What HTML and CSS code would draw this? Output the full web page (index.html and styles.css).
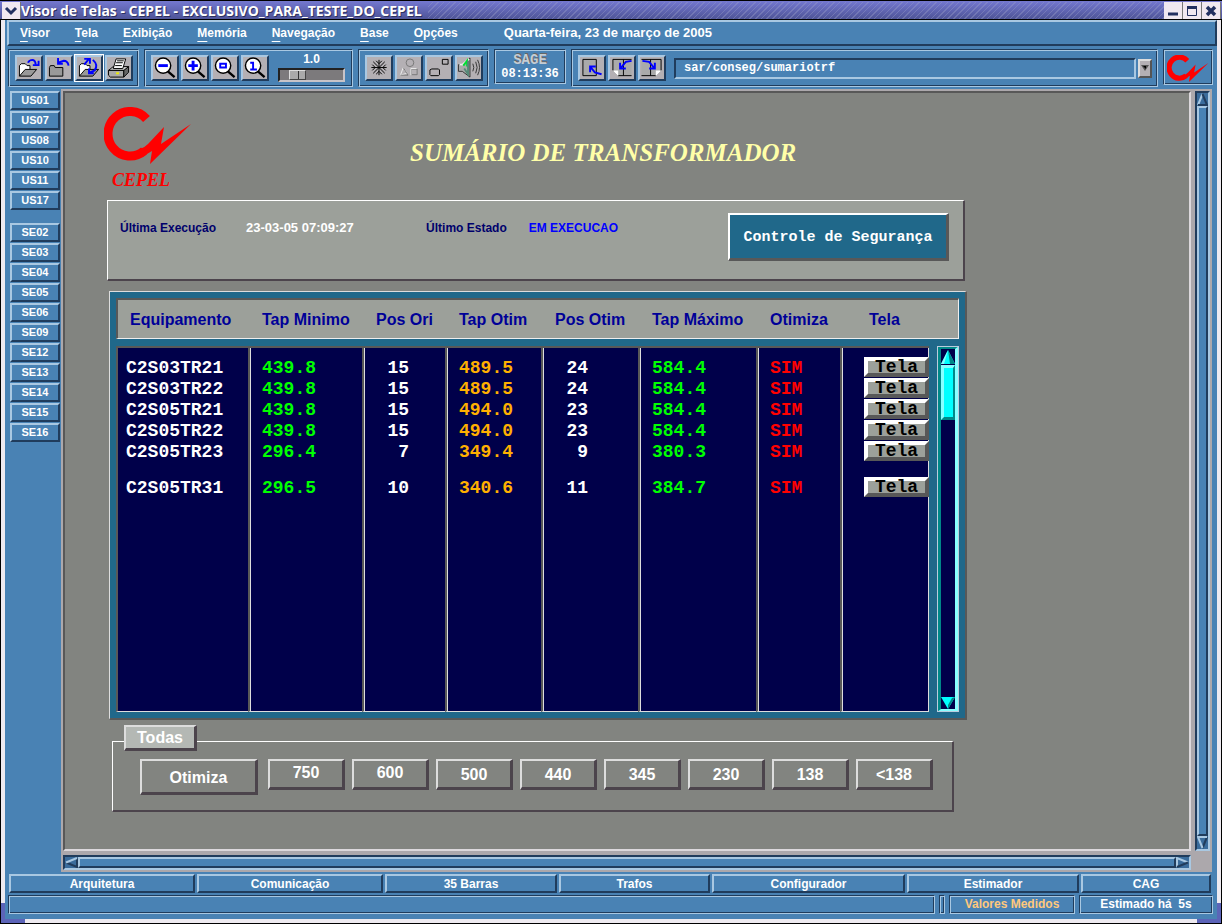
FILE: index.html
```html
<!DOCTYPE html>
<html lang="pt-BR">
<head>
<meta charset="utf-8">
<title>Visor de Telas - CEPEL</title>
<link rel="stylesheet" href="styles.css">
</head>
<body>
<svg class="defs" aria-hidden="true">
  <symbol id="logo" viewBox="0 0 88 57">
    <path class="ring" d="M42.500 12A22 22.300 0 1 0 40 44" fill="none" stroke="#f00"/>
    <path d="M36 42Q40 41 44 37L60 20L57 37L87 17L46 57L48 44L38 50Z" fill="#f00"/>
  </symbol>
  <symbol id="lens" viewBox="0 0 24 23">
    <circle cx="10" cy="9" r="8" fill="#fff" stroke="#000" stroke-width="1.500"/>
    <path d="M15 15L22 21" stroke="#000" stroke-width="2.500"/>
  </symbol>
</svg>

<header class="titlebar">
  <button class="wm" aria-label="Menu da janela"><svg width="14" height="14" viewBox="0 0 14 14"><path d="M2 4L7 9L12 4" fill="none" stroke="#223060" stroke-width="3"/></svg></button>
  <h1>Visor de Telas - CEPEL - EXCLUSIVO_PARA_TESTE_DO_CEPEL</h1>
  <div class="hatch"></div>
  <button class="wm" aria-label="Minimizar"><svg width="14" height="14" viewBox="0 0 14 14"><path d="M2 10H12" stroke="#223060" stroke-width="3"/></svg></button>
  <button class="wm" aria-label="Maximizar"><svg width="14" height="14" viewBox="0 0 14 14"><path d="M2.500 3V11.500H11.500V3" fill="none" stroke="#223060"/><path d="M2 3.500H12" stroke="#223060" stroke-width="3"/></svg></button>
  <button class="wm" aria-label="Fechar"><svg width="14" height="14" viewBox="0 0 14 14"><path d="M3 3L11 11M11 3L3 11" stroke="#223060" stroke-width="3.500"/></svg></button>
</header>

<div class="window">
  <nav class="menubar">
    <button><u>V</u>isor</button>
    <button><u>T</u>ela</button>
    <button><u>E</u>xibição</button>
    <button><u>M</u>emória</button>
    <button><u>N</u>avegação</button>
    <button><u>B</u>ase</button>
    <button><u>O</u>pções</button>
    <span class="today">Quarta-feira, 23 de março de 2005</span>
  </nav>

  <div class="toolbar">
    <div class="group">
      <button class="tool" aria-label="Abrir"><svg viewBox="0 0 24 23"><path d="M2 20V9L4 7H8L10 9H13V13" fill="#fff" stroke="#000"/><path d="M2 20L8 13H20L14 20Z" fill="#999" stroke="#000"/><path d="M11 6Q12 3 16 3Q19 4 19 8" fill="none" stroke="#00f" stroke-width="2"/><path d="M22 4V8.500H16" fill="none" stroke="#00f" stroke-width="2"/></svg></button>
      <button class="tool" aria-label="Fechar tela"><svg viewBox="0 0 24 23"><path d="M2 20V11L3 9H7L8 11H16V20Z" fill="#999" stroke="#000"/><path d="M22 9Q21 4 17 4L11 6" fill="none" stroke="#00f" stroke-width="2"/><path d="M11 1V7H16" fill="none" stroke="#00f" stroke-width="2"/></svg></button>
      <button class="tool active" aria-label="Recarregar"><svg viewBox="0 0 24 23"><path d="M2 20V9L4 7H8L10 9H13V13" fill="#fff" stroke="#000"/><path d="M2 20L8 13H22L16 20Z" fill="#999" stroke="#000"/><path d="M7 8L12 2M7 2H13V7M16 3Q22 8 18 14L13 16M12 12V17H17" fill="none" stroke="#00f" stroke-width="2"/></svg></button>
      <button class="tool" aria-label="Imprimir"><svg viewBox="0 0 24 23"><path d="M1 14L6 10H22L18 14Z" fill="#ccc" stroke="#000"/><path d="M1 14H17V21H3L1 19Z" fill="#aaa" stroke="#000"/><path d="M17 14L22 10V16L17 21Z" fill="#666" stroke="#000"/><path d="M6 12L9 2H19L16 12Z" fill="#fff" stroke="#000"/><path d="M10 4H17M9 6H16M8 9H15" stroke="#000"/><path d="M9 17H12" stroke="#ee0" stroke-width="2"/></svg></button>
    </div>

    <div class="group">
      <button class="tool" aria-label="Reduzir"><svg viewBox="0 0 24 23"><use href="#lens"/><path d="M5 9H15" stroke="#00f" stroke-width="3"/></svg></button>
      <button class="tool" aria-label="Ampliar"><svg viewBox="0 0 24 23"><use href="#lens"/><path d="M5 9H15M10 4V14" stroke="#00f" stroke-width="3"/></svg></button>
      <button class="tool" aria-label="Ampliar área"><svg viewBox="0 0 24 23"><use href="#lens"/><path d="M7 7H13V11H7Z" fill="none" stroke="#00f" stroke-width="2"/></svg></button>
      <button class="tool" aria-label="Tamanho original"><svg viewBox="0 0 24 23"><use href="#lens"/><path d="M7 6H10V13M7 13H14" fill="none" stroke="#00f" stroke-width="2"/></svg></button>
      <label class="zoom">1.0<input type="range" min="0" max="10" value="2"></label>
    </div>

    <div class="group">
      <button class="tool" aria-label="Congelar"><svg viewBox="0 0 24 23"><path d="M12 3V19M4 11H20M6 5L18 17M18 5L6 17" stroke="#000"/><path d="M9 4L12 7L15 4M9 18L12 15L15 18M5 8L8 11L5 14M19 8L16 11L19 14" fill="none" stroke="#000"/></svg></button>
      <button class="tool" aria-label="Formas"><svg viewBox="0 0 24 23"><circle cx="13" cy="6" r="4" fill="#b5b1b5" stroke="#777"/><path d="M3 19L6 11L10 17Z" fill="#b5b1b5" stroke="#eee"/><path d="M3 19H11L6 11" fill="none" stroke="#777"/><path d="M14.500 12.500H20.500V18.500H14.500Z" fill="#b5b1b5" stroke="#777"/><path d="M14 19V12H20" fill="none" stroke="#eee"/></svg></button>
      <button class="tool" aria-label="Navegar"><svg viewBox="0 0 24 23"><path d="M15.500 2.500H21.500V7.500H15.500Z M4.500 12.500H11.500L12.500 13.500V18.500L11.500 19.500H3.500L2.500 18.500V13.500Z" fill="none" stroke="#000"/></svg></button>
      <button class="tool" aria-label="Som"><svg viewBox="0 0 24 23"><path d="M1 8H5L13 1V21L5 15H1Z" fill="#aaa" stroke="#333"/><path d="M2 8H5L12 2" fill="none" stroke="#eee" stroke-width="2"/><path d="M6 9L10 4V10" fill="none" stroke="#0d3" stroke-width="2"/><path d="M7 12L11 18V4" fill="none" stroke="#587" stroke-width="2"/><path d="M16 7Q18 11 16 15M19 5Q22 11 19 17M21 3Q25 11 21 19" fill="none" stroke="#333"/></svg></button>
    </div>

    <div class="group clock"><span class="sage">SAGE</span><time>08:13:36</time></div>

    <div class="group path">
      <button class="tool" aria-label="Tela superior"><svg viewBox="0 0 24 23"><path d="M2.500 2.500H16.500V19.500H2.500Z" fill="#aaa" stroke="#000"/><path d="M10 16V10H16M10 10L15 16L22 18" fill="none" stroke="#00f" stroke-width="2"/></svg></button>
      <button class="tool" aria-label="Tela anterior"><svg viewBox="0 0 24 23"><path d="M22 2.500H2.500V14L8 19.500H22M13.500 2.500V19.500" fill="#aaa" stroke="#000"/><path d="M2 14H8V20Z" fill="#fff"/><path d="M10 6V12H16M11 11L16 5L22 4" fill="none" stroke="#00f" stroke-width="2"/></svg></button>
      <button class="tool" aria-label="Próxima tela"><svg viewBox="0 0 24 23"><path d="M1 2.500H21.500V14L16 19.500H1M10.500 2.500V19.500" fill="#aaa" stroke="#000"/><path d="M22 14H16V20Z" fill="#fff"/><path d="M15 6V12H9M14 11L9 5L2 4" fill="none" stroke="#00f" stroke-width="2"/></svg></button>
      <input class="address" type="text" value="sar/conseg/sumariotrf" aria-label="Tela">
      <button class="drop" aria-label="Histórico"><svg width="8" height="6" viewBox="0 0 8 6"><path d="M0 0H8L4 6Z" fill="#555"/><path d="M2 1H5V4Z" fill="#000"/></svg></button>
    </div>

    <div class="group brand"><svg width="42" height="27"><use href="#logo"/></svg></div>
  </div>

  <div class="middle">
    <aside class="stations">
      <button>US01</button><button>US07</button><button>US08</button><button>US10</button><button>US11</button><button>US17</button>
      <button class="split">SE02</button><button>SE03</button><button>SE04</button><button>SE05</button><button>SE06</button><button>SE09</button><button>SE12</button><button>SE13</button><button>SE14</button><button>SE15</button><button>SE16</button>
    </aside>

    <div class="viewer">
      <main class="canvas">
        <div class="heading">
          <div class="cepel"><svg width="88" height="57"><use href="#logo"/></svg><span>CEPEL</span></div>
          <h2>SUMÁRIO DE TRANSFORMADOR</h2>
        </div>

        <section class="state">
          <dl>
            <dt>Última Execução</dt><dd class="when">23-03-05 07:09:27</dd>
            <dt>Último Estado</dt><dd class="run">EM EXECUCAO</dd>
          </dl>
          <button class="security">Controle de Segurança</button>
        </section>

        <section class="sheet">
          <table>
            <colgroup><col class="w-eq"><col class="w-min"><col class="w-ori"><col class="w-tap"><col class="w-pos"><col class="w-max"><col class="w-oti"><col></colgroup>
            <thead>
              <tr><th>Equipamento</th><th>Tap Minimo</th><th>Pos Ori</th><th>Tap Otim</th><th>Pos Otim</th><th>Tap Máximo</th><th>Otimiza</th><th>Tela</th></tr>
            </thead>
            <tbody class="gap"><tr><td colspan="8"></td></tr></tbody>
            <tbody class="rows">
              <tr class="first"><td>C2S03TR21</td><td>439.8</td><td>15</td><td>489.5</td><td>24</td><td>584.4</td><td>SIM</td><td><button>Tela</button></td></tr>
              <tr><td>C2S03TR22</td><td>439.8</td><td>15</td><td>489.5</td><td>24</td><td>584.4</td><td>SIM</td><td><button>Tela</button></td></tr>
              <tr><td>C2S05TR21</td><td>439.8</td><td>15</td><td>494.0</td><td>23</td><td>584.4</td><td>SIM</td><td><button>Tela</button></td></tr>
              <tr><td>C2S05TR22</td><td>439.8</td><td>15</td><td>494.0</td><td>23</td><td>584.4</td><td>SIM</td><td><button>Tela</button></td></tr>
              <tr><td>C2S05TR23</td><td>296.4</td><td>7</td><td>349.4</td><td>9</td><td>380.3</td><td>SIM</td><td><button>Tela</button></td></tr>
              <tr class="apart"><td>C2S05TR31</td><td>296.5</td><td>10</td><td>340.6</td><td>11</td><td>384.7</td><td>SIM</td><td><button>Tela</button></td></tr>
              <tr class="fill"><td></td><td></td><td></td><td></td><td></td><td></td><td></td><td></td></tr>
            </tbody>
          </table>
          <div class="edge">
            <div class="corner"></div>
            <div class="cyanbar">
              <svg width="14" height="14" viewBox="0 0 14 14"><path d="M7 0L14 14H0Z" fill="#0ff"/><path d="M7 0L14 14H9Z" fill="#088"/><path d="M7 0L0 14H3Z" fill="#8ff"/></svg>
              <div class="thumb"></div>
              <svg class="end" width="14" height="12" viewBox="0 0 14 12"><path d="M0 0H14L7 12Z" fill="#0ff"/><path d="M14 0L7 12V8L11 1Z" fill="#088"/></svg>
            </div>
          </div>
        </section>

        <section class="levels">
          <button class="all">Todas</button>
          <div class="choices">
            <button class="optimize">Otimiza</button>
            <button class="high">750</button><button class="high">600</button><button>500</button><button>440</button><button>345</button><button>230</button><button>138</button><button>&lt;138</button>
          </div>
        </section>
      </main>

      <div class="bar vertical">
        <svg width="11" height="13" viewBox="0 0 11 13"><path d="M5.500 1L1 12" stroke="#a9c8e2" stroke-width="2"/><path d="M5.500 1L10 12H1" fill="none" stroke="#203c5c" stroke-width="2"/></svg>
        <div class="slab"></div>
        <svg width="11" height="13" viewBox="0 0 11 13"><path d="M10 1L5.500 12" stroke="#203c5c" stroke-width="2"/><path d="M10 1H1L5.500 12" fill="none" stroke="#a9c8e2" stroke-width="2"/></svg>
      </div>
      <div class="bar horizontal">
        <svg width="13" height="11" viewBox="0 0 13 11"><path d="M12 1V10L1 5.500" fill="none" stroke="#203c5c" stroke-width="2"/><path d="M12 1L1 5.500" stroke="#a9c8e2" stroke-width="2"/></svg>
        <div class="slab"></div>
        <svg width="13" height="11" viewBox="0 0 13 11"><path d="M12 5.500L1 1V10" fill="none" stroke="#a9c8e2" stroke-width="2"/><path d="M12 5.500L1 10" stroke="#203c5c" stroke-width="2"/></svg>
      </div>
    </div>
  </div>

  <nav class="tabs">
    <button>Arquitetura</button><button>Comunicação</button><button>35 Barras</button><button>Trafos</button><button>Configurador</button><button>Estimador</button><button>CAG</button>
  </nav>

  <footer class="status">
    <div class="message"></div>
    <div class="lamp"></div>
    <div class="measured">Valores Medidos</div>
    <div class="estimate">Estimado há&nbsp; 5s</div>
  </footer>
</div>
</body>
</html>
```
FILE: styles.css
```css
:root {
  --blue: #4982b4;
  --light: #a9c8e2;
  --dark: #203c5c;
  --teal: #20688a;
  --navy: #00004a;
  --panel: #9ca09a;
  --gray: #828480;
  --sans: "Liberation Sans", Arial, sans-serif;
  --mono: "Liberation Mono", "Courier New", monospace;
}

* { box-sizing: border-box; }

body {
  margin: 0;
  min-height: 100vh;
  display: flex;
  flex-direction: column;
  background: #000;
  font: bold 12px/14px var(--sans);
  color: #fff;
}

button {
  margin: 0;
  padding: 0;
  border: 0;
  border-radius: 0;
  background: none;
  font: inherit;
  color: inherit;
  white-space: nowrap;
}

svg { display: block; flex: none; }
.defs { width: 0; height: 0; position: absolute; }
.ring { stroke-width: var(--ring, 9px); }

/* Window frame */
.titlebar {
  display: flex;
  height: 20px;
  padding: 1px 1px 1px 2px;
  background: linear-gradient(#7478d0, #4c5294);
  border-top: 1px solid #000;
}
.titlebar h1 {
  margin: 0 6px 0 0;
  font: bold 14px/18px "Open Sans", "Noto Sans", sans-serif;
  text-shadow: 1px 1px 0 #2c3060;
  white-space: nowrap;
}
.hatch {
  flex: 1;
  background: repeating-linear-gradient(135deg, transparent 0 3px, #9a9ec860 3px 4px);
}
.wm {
  width: 19px;
  display: grid;
  place-items: center;
  background: #f0e8f0;
  border-right: 1px solid #777;
}
.window {
  position: relative;
  flex: 1;
  display: flex;
  flex-direction: column;
  margin: 0 1px 1px;
  padding-bottom: 5px;
  background: var(--blue);
  border: solid #eeeaf0;
  border-width: 0 4px 4px;
  outline: 1px solid #000;
}
/* Resize grips lying over the bottom corners of the frame */
.window::before, .window::after {
  content: "";
  position: absolute;
  bottom: -4px;
  width: 20px;
  height: 16px;
  border: 4px solid #5c64b8;
  border-top: 0;
}
.window::before { left: -4px; border-right: 0; }
.window::after { right: -4px; border-left: 0; }

/* Menu bar */
.menubar {
  display: flex;
  align-items: center;
  gap: 25px;
  height: 26px;
  margin: 0 0 3px 2px;
  padding: 0 11px;
  border: 2px solid;
  border-color: var(--light) var(--dark) var(--dark) var(--light);
}
.menubar u { text-underline-offset: 4px; text-decoration-thickness: 1px; }
.today { margin-left: 21px; font-size: 13px; }

/* Toolbar */
.toolbar {
  display: flex;
  align-items: flex-start;
  gap: 5px;
  padding: 0 4px 2px 3px;
}
.group, .status > div {
  border: 1px solid;
  border-color: var(--dark) var(--light) var(--light) var(--dark);
  box-shadow: inset 1px 1px 0 var(--light), inset -1px -1px 0 var(--dark);
}
.group {
  display: flex;
  align-items: center;
  gap: 2px;
  height: 38px;
  padding: 0 5px 0 6px;
}
.tool {
  width: 28px;
  height: 26px;
  background: #b4b0b4;
  border: 2px solid;
  border-color: var(--light) var(--dark) var(--dark) var(--light);
}
.tool svg { width: 24px; height: 22px; }
.tool.active { outline: 1px solid #fff; }
.zoom {
  display: flex;
  flex-direction: column;
  align-items: center;
  gap: 2px;
  width: 67px;
  margin: 0 2px 3px 7px;
}
.zoom input {
  appearance: none;
  width: 67px;
  height: 14px;
  margin: 0;
  background: #7c7a7c;
  border: 2px solid;
  border-color: #222 #c8c4c8 #c8c4c8 #222;
}
.zoom input::-webkit-slider-thumb {
  appearance: none;
  width: 17px;
  height: 10px;
  background: linear-gradient(90deg, #aaa 8px, #333 8px 9px, #aaa 9px);
  border: 1px solid;
  border-color: #ddd #444 #444 #ddd;
}
.clock {
  flex-direction: column;
  justify-content: center;
  gap: 0;
  width: 72px;
  height: 35px;
  padding: 0;
  font: bold 12px/14px var(--mono);
}
.sage { font-size: 14px; color: #c4ccd4; text-shadow: 1px -1px 0 #666; }
.path { flex: 1; }
.address {
  flex: 1;
  min-width: 0;
  height: 21px;
  margin-left: 6px;
  padding: 0 8px;
  background: var(--blue);
  border: 2px solid;
  border-color: var(--dark) var(--light) var(--light) var(--dark);
  color: #fff;
  font: bold 12px/14px var(--mono);
}
.drop {
  display: grid;
  place-items: center;
  width: 14px;
  height: 19px;
  background: #b4b0b4;
  border: 2px solid;
  border-color: #ddd #555 #555 #ddd;
}
.brand { height: 36px; padding: 2px 3px 0; --ring: 11px; }

/* Station list and viewer */
.middle { flex: 1; display: flex; }
.stations {
  display: flex;
  flex-direction: column;
  gap: 1px;
  width: 56px;
  padding: 2px 1px 0 5px;
}
.stations button, .tabs button {
  height: 19px;
  border: 2px solid;
  border-color: var(--light) var(--dark) var(--dark) var(--light);
}
.stations button { font-size: 11px; line-height: 13px; }
.stations .split { margin-top: 12px; }
.viewer {
  flex: 1;
  min-width: 0;
  display: grid;
  grid-template: 1fr 15px / 1fr 15px;
  gap: 4px;
  margin-right: 5px;
  padding: 2px;
  background: #aca8ac;
}
.canvas {
  min-width: 0;
  padding: 14px 40px 36px 39px;
  background: var(--gray);
  border: 2px solid;
  border-color: #585858 #dcd8dc #dcd8dc #585858;
}
.bar {
  display: flex;
  align-items: center;
  background: #3a6c9c;
  border: 2px solid;
  border-color: var(--dark) var(--light) var(--light) var(--dark);
}
.vertical { flex-direction: column; }
.slab {
  flex: 1;
  align-self: stretch;
  background: var(--blue);
  border: 2px solid;
  border-color: var(--light) var(--dark) var(--dark) var(--light);
}

/* Page heading */
.heading { display: flex; height: 93px; }
.cepel {
  width: 88px;
  color: #f00;
  font: italic bold 18px/20px "Liberation Serif", "Times New Roman", serif;
}
.cepel span { display: block; padding: 6px 0 0 8px; }
.heading h2 {
  margin: 31px 0 0 218px;
  color: #ffffa8;
  font: italic bold 25px/30px "Liberation Serif", "Times New Roman", serif;
  white-space: nowrap;
}

/* Execution state */
.state {
  display: flex;
  align-items: flex-start;
  justify-content: space-between;
  max-width: 858px;
  height: 81px;
  margin-left: 3px;
  padding: 12px 14px 0 12px;
  background: var(--panel);
  border: solid;
  border-width: 1px 2px 2px 1px;
  border-color: #fff #4c444c #4c444c #fff;
}
.state dl { display: flex; margin: 8px 0 0; }
.state dt { color: #00006c; }
.state dd { margin: 0; }
.state .when { width: 180px; margin-left: 30px; font-size: 13px; }
.state .run { margin-left: 22px; color: #00f; }
.security {
  width: 221px;
  height: 48px;
  padding-top: 2px;
  background: var(--teal);
  border: solid;
  border-width: 2px 3px 3px 2px;
  border-color: #fff #585858 #585858 #fff;
  font: bold 15px/18px var(--mono);
}

/* Transformer table */
.sheet {
  display: flex;
  max-width: 858px;
  margin: 10px 0 0 5px;
  padding: 6px;
  background: var(--teal);
  border: solid;
  border-width: 1px 2px 2px 1px;
  border-color: #ddd #585858 #585858 #ddd;
}
table {
  flex: 1;
  min-width: 0;
  table-layout: fixed;
  border-spacing: 0;
}
.w-eq { width: 132px; }
.w-min { width: 114px; }
.w-ori { width: 83px; }
.w-tap { width: 96px; }
.w-pos { width: 97px; }
.w-max { width: 118px; }
.w-oti { width: 84px; }
th, .corner {
  height: 41px;
  background: var(--panel);
  border-top: 2px solid #585858;
  border-bottom: 1px solid #eee;
}
th {
  padding: 2px 0 0 14px;
  color: #000098;
  font: bold 16px/20px var(--sans);
  text-align: left;
  white-space: nowrap;
}
th:first-child { border-left: 2px solid #585858; padding-left: 12px; }
th:last-child { padding-left: 29px; }
.gap td { height: 7px; padding: 0; }

.rows td {
  height: 21px;
  padding: 0 0 0 12px;
  background: var(--navy);
  border-left: 2px solid #585858;
  box-shadow: inset 1px 0 0 #ddd;
  font: bold 18px/20px var(--mono);
  vertical-align: bottom;
}
.rows .first td { height: 32px; border-top: 2px solid #585858; }
.rows .apart td { height: 36px; }
.rows .fill td { height: 214px; border-bottom: 1px solid #ddd; }
.rows td:first-child { padding-left: 8px; box-shadow: none; }
.rows td:nth-child(2), .rows td:nth-child(6) { color: #0f0; }
.rows td:nth-child(4) { color: #ffb000; }
.rows td:nth-child(7) { color: #f00; }
.rows td:nth-child(3) { padding-right: 36px; text-align: right; }
.rows td:nth-child(5) { padding-right: 50px; text-align: right; }
.rows td:last-child {
  padding: 0 0 1px 22px;
  box-shadow: inset 1px 0 0 #ddd, inset -1px 0 0 #ddd;
}
.rows button {
  display: block;
  width: 100%;
  height: 20px;
  background: var(--panel);
  border: 4px solid;
  border-color: #fff #585858 #585858 #fff;
  color: #000;
  line-height: 12px;
}
.edge { display: flex; flex-direction: column; gap: 7px; width: 30px; }
.corner { border-right: 1px solid #eee; }
.cyanbar {
  flex: 1;
  display: flex;
  flex-direction: column;
  align-items: center;
  margin-left: 8px;
  padding-top: 1px;
  background: var(--navy);
  border: solid;
  border-width: 3px 4px 3px 4px;
  border-color: #088 #8ff #8ff #088;
  outline: 1px solid #bcd;
  outline-offset: -1px;
}
.thumb {
  width: 14px;
  height: 55px;
  margin-top: 1px;
  background: #0ff;
  border: solid;
  border-width: 3px 2px 3px 3px;
  border-color: #8ff #088 #088 #8ff;
}
.cyanbar .end { margin-top: auto; }

/* Voltage levels */
.levels {
  max-width: 842px;
  height: 71px;
  margin: 21px 0 0 8px;
  border: solid;
  border-width: 1px 2px 2px 1px;
  border-color: #fff #4c444c #4c444c #fff;
}
.levels button {
  width: 77px;
  height: 31px;
  padding-top: 2px;
  border: solid;
  border-width: 2px 3px 3px 2px;
  border-color: #ddd #4c444c #4c444c #ddd;
  font: bold 16px/20px var(--sans);
}
.levels .all {
  display: block;
  width: 73px;
  height: 26px;
  margin: -17px 0 8px 11px;
  padding: 0;
  background: #b4b8b4;
}
.choices { display: flex; gap: 7px; padding-left: 27px; }
.levels .optimize { width: 118px; height: 36px; margin-right: 3px; }
.levels .high { padding: 0 0 2px; }

/* Bottom rows */
.tabs {
  display: grid;
  grid-template-columns: 186fr 186fr 172fr 151fr 193fr 172fr 130fr;
  gap: 2px;
  margin: 2px 6px 2px 4px;
}
.status { display: flex; gap: 4px; padding: 0 4px 0 3px; }
.status > div { height: 19px; line-height: 17px; text-align: center; white-space: pre; }
.status .message { flex: 1; }
.status .lamp { width: 6px; }
.status .measured { width: 126px; color: #ffc87c; }
.status .estimate { width: 134px; }
```
